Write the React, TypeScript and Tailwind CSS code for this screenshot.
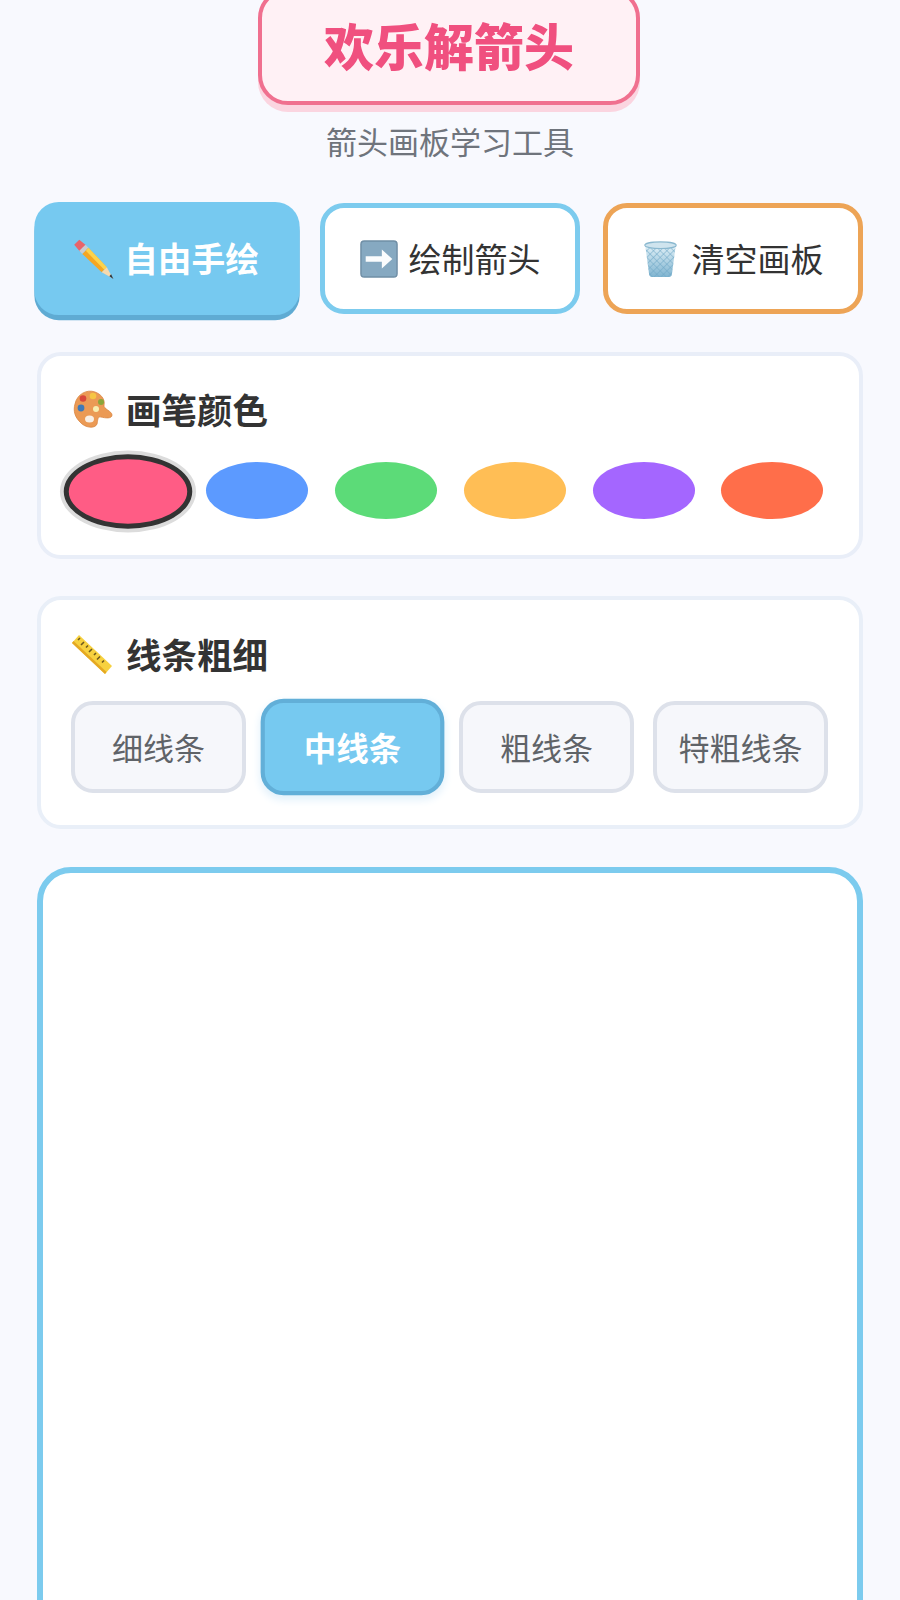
import React from "react";

const Pencil = () => (
  <svg viewBox="0 0 40 40" className="w-[40px] h-[40px] shrink-0">
    <path d="M1 6 L6 1 L12 6 Q13 7 12 8 L8 12 Q7 13 6 12 Z" fill="#e8646a" />
    <path d="M6 12 L12 6 L15 9 L9 15 Z" fill="#c9ccd2" />
    <path d="M9 15 L15 9 L33 28 L28 33 Z" fill="#f5a623" />
    <path d="M12.500 12 L15 9 L33 28 L30.500 30.500 Z" fill="#fcd34d" />
    <path d="M28 33 L33 28 L39 39 Z" fill="#f5d9ae" />
    <path d="M35.500 36.800 L37.200 35 L39.500 39.500 Z" fill="#2d3640" />
  </svg>
);

const ArrowEmoji = () => (
  <svg viewBox="0 0 40 40" className="w-[38px] h-[38px] shrink-0">
    <rect x="1" y="1" width="38" height="38" rx="3.5" fill="#86a9c1" />
    <rect x="1" y="1" width="38" height="38" rx="3.5" fill="none" stroke="#6f8ea5" strokeWidth="1.5" />
    <path d="M6 17 H23 V10 L34 20 L23 30 V23 H6 Z" fill="#fafcfd" />
  </svg>
);

const Trash = () => (
  <svg viewBox="0 0 36 40" className="w-[35px] h-[38px] shrink-0">
    <defs>
      <linearGradient id="bin" x1="0" y1="0" x2="0" y2="1">
        <stop offset="0" stopColor="#dfeff6" />
        <stop offset="1" stopColor="#7fb4d0" />
      </linearGradient>
      <pattern id="mesh" width="5" height="5" patternUnits="userSpaceOnUse" patternTransform="rotate(45)">
        <path d="M0 0H5M0 0V5" stroke="#6fa8c6" strokeWidth="1.1" fill="none" />
      </pattern>
    </defs>
    <path d="M2 6 L6 36 Q6.500 39 10 39 H26 Q29.500 39 30 36 L34 6 Z" fill="url(#bin)" />
    <path d="M2 6 L6 36 Q6.500 39 10 39 H26 Q29.500 39 30 36 L34 6 Z" fill="url(#mesh)" />
    <ellipse cx="18" cy="5.500" rx="16.500" ry="3.500" fill="#cfe4ee" stroke="#8ab8cf" strokeWidth="1.200" />
  </svg>
);

const Palette = () => (
  <svg viewBox="0 0 42 40" className="w-[42px] h-[40px] shrink-0">
    <path
      d="M3 15 C5 5 15 0 23 3 C31 6 33 12 32 16 C31 20 40 22 40 26 C40 30 33 29 29 28 C25 27 26 32 25 35 C23 40 13 39 8 33 C3 28 1 22 3 15 Z"
      fill="#eb9a55"
      stroke="#d9843f"
      strokeWidth="0.800"
    />
    <circle cx="11" cy="9.500" r="3.300" fill="#d9483b" />
    <circle cx="21" cy="7" r="3.300" fill="#f6c544" />
    <circle cx="29" cy="13" r="3" fill="#8aa63a" />
    <circle cx="9" cy="19" r="3.400" fill="#3f79b8" />
    <circle cx="24" cy="20" r="3" fill="#f8eeb0" />
    <ellipse cx="17.500" cy="30" rx="4.500" ry="3.500" fill="#f8efe6" />
  </svg>
);

const Ruler = () => (
  <svg viewBox="0 0 40 40" className="w-[40px] h-[40px] shrink-0">
    <path d="M0 9 L7 1 L40 32 L33 40 Z" fill="#f7d13f" />
    <path d="M0 9 L33 40 L34.500 38 L1.500 7 Z" fill="#e5a823" />
    <path
      d="M8 4 L6 6 M12 8 L9 11 M16 11.500 L14 13.500 M20 15 L17 18 M24 19 L22 21 M28 22.500 L25 25.500 M32 26.500 L30 28.500"
      stroke="#6f5a1e"
      strokeWidth="1.600"
      fill="none"
    />
  </svg>
);

const colors = ["#ff5c85", "#5c9aff", "#5cdb78", "#ffbe55", "#a466ff", "#ff6e4a"];
const widths = ["细线条", "中线条", "粗线条", "特粗线条"];

export default function App() {
  return (
    <div
      className="h-[1600px] overflow-hidden bg-[#f8f9fe] px-[37px]"
      style={{ fontFamily: '"Noto Sans CJK SC", "Noto Sans", sans-serif' }}
    >
      <div className="flex flex-col items-center">
        <div className="-mt-[12px] -ml-[2px] flex h-[117px] w-[382px] items-center justify-center rounded-[30px] border-[4px] border-[#f0708f] bg-[#fff1f5] pb-[6px] shadow-[0_7px_0_#fbd5e0]">
          <h1 className="text-[50px] leading-none font-black text-[#f0507f]">欢乐解箭头</h1>
        </div>
        <p className="mt-[14px] text-[31px] leading-[44px] text-[#6f747c]">箭头画板学习工具</p>
      </div>

      <div className="mt-[40px] grid grid-cols-[260px_260px_260px] gap-x-[23px]">
        <button className="flex h-[111px] scale-[1.02] items-center justify-center gap-[10px] rounded-[24px] bg-[#76c9f0] pr-[2px] text-[33px] font-bold text-white shadow-[0_5px_0_#5fabd3]">
          <Pencil />
          自由手绘
        </button>
        <button className="flex h-[111px] items-center justify-center gap-[11px] rounded-[24px] border-[5px] border-[#7ccbee] bg-white text-[33px] text-[#333333]">
          <ArrowEmoji />
          绘制箭头
        </button>
        <button className="flex h-[111px] items-center justify-center gap-[14px] rounded-[24px] border-[5px] border-[#eda456] bg-white text-[33px] text-[#333333]">
          <Trash />
          清空画板
        </button>
      </div>

      <section className="mt-[38px] h-[207px] rounded-[24px] border-[4px] border-[#e9eef8] bg-white px-[31px] pt-[31px]">
        <h2 className="flex h-[44px] items-center gap-[12px] text-[35.500px] font-bold text-[#333333]">
          <Palette />
          画笔颜色
        </h2>
        <div className="mt-[31px] ml-[5.500px] flex w-[746px] justify-between">
          {colors.map((c, i) => (
            <span
              key={c}
              className={
                i === 0
                  ? "h-[59px] w-[102px] -translate-x-[1px] scale-[1.26] rounded-[50%] border-[4px] border-[#333333] shadow-[0_0_0_3px_#dcdcdc]"
                  : "h-[57px] w-[102px] rounded-[50%]"
              }
              style={{ backgroundColor: c }}
            />
          ))}
        </div>
      </section>

      <section className="mt-[37px] h-[233px] rounded-[24px] border-[4px] border-[#e9eff8] bg-white px-[31px] pt-[32px]">
        <h2 className="flex h-[44px] items-center gap-[14px] text-[35.500px] font-bold text-[#333333]">
          <Ruler />
          线条粗细
        </h2>
        <div className="mt-[25px] -ml-[1px] grid w-[757px] grid-cols-4 gap-x-[19px]">
          {widths.map((w, i) => (
            <button
              key={w}
              className={
                i === 1
                  ? "flex h-[92px] scale-[1.05] items-center justify-center rounded-[22px] border-[4px] border-[#62afd8] bg-[#76c9f0] text-[31px] font-bold text-white shadow-[0_4px_8px_#e2f1fb]"
                  : "flex h-[92px] items-center justify-center rounded-[22px] border-[4px] border-[#dde1ea] bg-[#f6f7fb] text-[31px] text-[#5f6368]"
              }
            >
              {w}
            </button>
          ))}
        </div>
      </section>

      <div className="mt-[38px] h-[900px] rounded-[34px] border-[6px] border-[#7ccbee] bg-white" />
    </div>
  );
}
